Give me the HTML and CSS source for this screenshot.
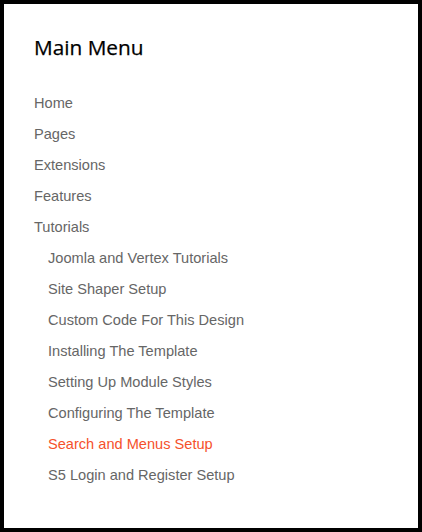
FILE: index.html
```html
<!DOCTYPE html>
<html lang="en">
<head>
<meta charset="utf-8">
<title>Main Menu</title>
<link rel="stylesheet" href="styles.css">
</head>
<body>
<div class="module">
  <h3 class="module-title">Main Menu</h3>
  <ul class="menu">
    <li><a href="#">Home</a></li>
    <li><a href="#">Pages</a></li>
    <li><a href="#">Extensions</a></li>
    <li><a href="#">Features</a></li>
    <li><a href="#">Tutorials</a>
      <ul class="submenu">
        <li><a href="#">Joomla and Vertex Tutorials</a></li>
        <li><a href="#">Site Shaper Setup</a></li>
        <li><a href="#">Custom Code For This Design</a></li>
        <li><a href="#">Installing The Template</a></li>
        <li><a href="#">Setting Up Module Styles</a></li>
        <li><a href="#">Configuring The Template</a></li>
        <li><a href="#" class="active">Search and Menus Setup</a></li>
        <li><a href="#">S5 Login and Register Setup</a></li>
      </ul>
    </li>
  </ul>
</div>
</body>
</html>
```
FILE: styles.css
```css
html, body {
  margin: 0;
  padding: 0;
  background: #000;
}
.module {
  box-sizing: border-box;
  width: 422px;
  height: 532px;
  border: 4px solid #000;
  background: #fff;
  padding: 30px 30px 0 30px;
}
.module-title {
  margin: 0 0 27px 0;
  font-family: "Open Sans", sans-serif;
  font-weight: 500;
  font-size: 20.8px;
  line-height: 27px;
  color: #000;
  -webkit-text-stroke: 0.25px #000;
}
.menu, .submenu {
  list-style: none;
  margin: 0;
  padding: 0;
}
.submenu {
  padding-left: 14px;
}
.menu a {
  display: block;
  font-family: "Liberation Sans", Arial, sans-serif;
  font-size: 14.6px;
  line-height: 31px;
  color: #666;
  text-decoration: none;
}
.menu a.active {
  color: #f5512b;
}
```
